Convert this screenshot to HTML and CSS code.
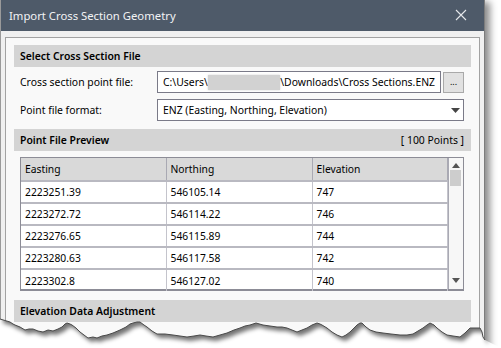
FILE: index.html
```html
<!DOCTYPE html>
<html lang="en">
<head>
    <meta charset="UTF-8">
    <title>Import Cross Section Geometry</title>
    <link rel="stylesheet" href="styles.css">
</head>
<body>
    <div class="window">
        <!-- Title bar -->
        <div class="titlebar">
            <span class="title">Import Cross Section Geometry</span>
            <svg class="close" width="12" height="12" viewBox="0 0 12 12">
                <path d="M1 1 L11 11 M11 1 L1 11" stroke="#e6e8eb" stroke-width="1.1" fill="none"/>
            </svg>
        </div>

        <div class="content">
            <div class="panel">
                <div class="band">Select Cross Section File</div>
                <div class="form">
                    <div class="row">
                        <span class="label">Cross section point file:</span>
                        <div class="field path">C:\Users\<span class="blur"></span>\Downloads\Cross Sections.ENZ</div>
                        <button class="browse">...</button>
                    </div>
                    <div class="row">
                        <span class="label">Point file format:</span>
                        <div class="field select">
                            <span>ENZ (Easting, Northing, Elevation)</span>
                            <svg width="9" height="5" viewBox="0 0 9 5"><path d="M0 0 H9 L4.5 5 Z" fill="#444"/></svg>
                        </div>
                    </div>
                </div>

                <div class="band split">
                    <span>Point File Preview</span>
                    <span class="count">[ 100 Points ]</span>
                </div>
                <div class="grid">
                    <table>
                        <colgroup>
                            <col class="c1"><col class="c2"><col class="c3">
                        </colgroup>
                        <thead>
                            <tr><th>Easting</th><th>Northing</th><th>Elevation</th></tr>
                        </thead>
                        <tbody>
                            <tr><td>2223251.39</td><td>546105.14</td><td>747</td></tr>
                            <tr><td>2223272.72</td><td>546114.22</td><td>746</td></tr>
                            <tr><td>2223276.65</td><td>546115.89</td><td>744</td></tr>
                            <tr><td>2223280.63</td><td>546117.58</td><td>742</td></tr>
                            <tr><td>2223302.8</td><td>546127.02</td><td>740</td></tr>
                        </tbody>
                    </table>
                    <div class="scrollbar">
                        <svg width="8" height="5" viewBox="0 0 8 5"><path d="M0 5 H8 L4 0 Z" fill="#555"/></svg>
                        <div class="thumb"></div>
                        <div class="track"></div>
                        <svg width="8" height="5" viewBox="0 0 8 5"><path d="M0 0 H8 L4 5 Z" fill="#555"/></svg>
                    </div>
                </div>

                <div class="band">Elevation Data Adjustment</div>
            </div>
        </div>
    </div>

    <!-- torn paper edge over the bottom of the screenshot -->
    <svg class="tear" width="501" height="36" viewBox="0 312 501 36">
        <defs>
            <clipPath id="below">
                <polygon points="0,319 10,322 13,324 15,325 20,327 25,330 29,329 33,329 38,331 43,332 48,330 53,331 58,329 62,327 65,324 67,323 70,324 72,325 76,328 80,332 84,335 88,338 93,337 97,338 102,336 107,335 113,333 120,330 126,327 130,324 133,323 137,322 140,322 144,325 147,327 152,331 157,334 165,334 173,335 180,336 187,337 194,336 200,335 206,336 213,337 220,335 227,333 234,330 240,328 245,326 250,325 256,323 263,325 270,326 277,327 282,327 287,328 292,330 297,332 302,330 307,328 312,325 317,323 320,324 322,325 327,328 332,332 337,335 342,337 346,335 350,332 354,328 357,325 360,323 362,323 366,327 370,330 376,332 383,333 391,334 400,335 407,335 413,334 418,331 423,328 427,325 430,323 434,325 437,328 442,332 447,335 453,336 460,337 465,333 470,328 475,328 480,328 482,332 483,337 485,340 501,348 0,348"/>
            </clipPath>
            <filter id="soft" x="-10%" y="-50%" width="120%" height="200%">
                <feGaussianBlur stdDeviation="2.2"/>
            </filter>
        </defs>
        <g clip-path="url(#below)">
            <rect x="0" y="312" width="501" height="36" fill="#fff"/>
            <polygon filter="url(#soft)" fill="rgba(0,0,0,0.55)" transform="translate(3,4)" points="0,300 0,319 10,322 13,324 15,325 20,327 25,330 29,329 33,329 38,331 43,332 48,330 53,331 58,329 62,327 65,324 67,323 70,324 72,325 76,328 80,332 84,335 88,338 93,337 97,338 102,336 107,335 113,333 120,330 126,327 130,324 133,323 137,322 140,322 144,325 147,327 152,331 157,334 165,334 173,335 180,336 187,337 194,336 200,335 206,336 213,337 220,335 227,333 234,330 240,328 245,326 250,325 256,323 263,325 270,326 277,327 282,327 287,328 292,330 297,332 302,330 307,328 312,325 317,323 320,324 322,325 327,328 332,332 337,335 342,337 346,335 350,332 354,328 357,325 360,323 362,323 366,327 370,330 376,332 383,333 391,334 400,335 407,335 413,334 418,331 423,328 427,325 430,323 434,325 437,328 442,332 447,335 453,336 460,337 465,333 470,328 475,328 480,328 482,332 483,337 485,340 485,300"/>
        </g>
        <polyline fill="none" stroke="#4a4a4a" stroke-width="1" points="0,319 10,322 13,324 15,325 20,327 25,330 29,329 33,329 38,331 43,332 48,330 53,331 58,329 62,327 65,324 67,323 70,324 72,325 76,328 80,332 84,335 88,338 93,337 97,338 102,336 107,335 113,333 120,330 126,327 130,324 133,323 137,322 140,322 144,325 147,327 152,331 157,334 165,334 173,335 180,336 187,337 194,336 200,335 206,336 213,337 220,335 227,333 234,330 240,328 245,326 250,325 256,323 263,325 270,326 277,327 282,327 287,328 292,330 297,332 302,330 307,328 312,325 317,323 320,324 322,325 327,328 332,332 337,335 342,337 346,335 350,332 354,328 357,325 360,323 362,323 366,327 370,330 376,332 383,333 391,334 400,335 407,335 413,334 418,331 423,328 427,325 430,323 434,325 437,328 442,332 447,335 453,336 460,337 465,333 470,328 475,328 480,328 482,332 483,337 485,340"/>
    </svg>
</body>
</html>
```

FILE: styles.css
```css
/* General Styling */
* {
    margin: 0;
    padding: 0;
    box-sizing: border-box;
}

body {
    position: relative;
    width: 501px;
    height: 348px;
    overflow: hidden;
    background: #fff;
    font-family: 'Noto Sans', 'Open Sans', sans-serif;
    font-size: 10.4px;
    color: #000;
}

.window {
    width: 485px;
    height: 348px;
    background: #f0f0f0;
    border-left: 1px solid #9a9a9a;
    border-right: 1px solid #7c7c7c;
    box-shadow: 5px 2px 7px rgba(0, 0, 0, 0.45);
    overflow: hidden;
}

.titlebar {
    height: 31px;
    background: #4e5a69;
    display: flex;
    align-items: center;
    justify-content: space-between;
    padding: 0 17px 1px 8px;
}

.title {
    color: #f2f3f5;
    font-size: 11.3px;
}

.content {
    padding: 6px 4px 0 4px;
}

.panel {
    background: #f9f9f9;
    border: 1px solid #a2a2a2;
    padding: 7px 8px 0 8px;
    height: 320px;
}

.band {
    height: 22px;
    background: #d4d4d4;
    font-weight: 600;
    display: flex;
    align-items: center;
    padding: 0 7px 0 6px;
}

.band.split {
    justify-content: space-between;
}

.count {
    font-weight: 400;
}

.form {
    padding: 4px 7px 8px 6px;
    display: flex;
    flex-direction: column;
    gap: 6px;
}

.row {
    display: flex;
    align-items: center;
    gap: 2px;
}

.label {
    width: 135px;
}

.field {
    flex: 1;
    height: 22px;
    background: #fff;
    border: 1px solid #7a7a88;
    display: flex;
    align-items: center;
    padding: 0 5px;
    white-space: nowrap;
    overflow: hidden;
}

.blur {
    display: inline-block;
    width: 77px;
    height: 15px;
    background: #d2d2d2;
    box-shadow: 0 0 2px #d2d2d2;
}

.browse {
    width: 21px;
    height: 21px;
    background: #e1e1e1;
    border: 1px solid #a9a9a9;
    font-family: inherit;
    font-size: 9px;
    line-height: 12px;
}

.select {
    justify-content: space-between;
    padding-right: 3px;
}

.grid {
    display: flex;
    margin: 6px 7px 9px 6px;
    border: 1px solid #8c8c96;
    border-bottom-width: 2px;
    height: 134px;
    background: #fff;
}

table {
    border-collapse: collapse;
    table-layout: fixed;
    width: 426px;
    font-size: 10.3px;
}

.c1 { width: 145px; }
.c2 { width: 146px; }
.c3 { width: 135px; }

th, td {
    text-align: left;
    font-weight: 400;
    padding: 0 4px;
    border-right: 1px solid #c4c4cc;
    border-bottom: 2px solid #b9b9c1;
    height: 22px;
    white-space: nowrap;
}

th {
    background: #d9d9d9;
    height: 23px;
    border-right-color: #a9a9b3;
}

tbody tr:last-child td {
    border-bottom: none;
}

.scrollbar {
    flex: 1;
    border-left: 1px solid #a9a9b3;
    background: #f7f7f7;
    display: flex;
    flex-direction: column;
    align-items: center;
    padding: 5px 0 6px;
}

.thumb {
    width: 11px;
    height: 16px;
    margin-top: 2px;
    background: #cdcdcd;
}

.track {
    flex: 1;
}

.tear {
    position: absolute;
    left: 0;
    top: 312px;
}
```
